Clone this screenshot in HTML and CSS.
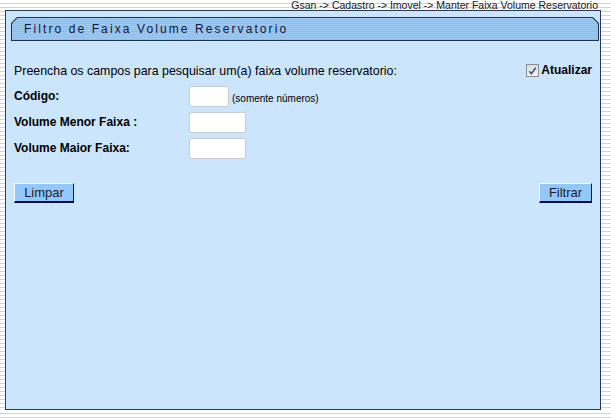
FILE: index.html
```html
<!DOCTYPE html>
<html lang="pt">
<head>
  <meta charset="UTF-8">
  <title>Filtro de Faixa Volume Reservatorio</title>
  <link rel="stylesheet" href="styles.css">
</head>
<body>
  <div class="breadcrumb">Gsan -&gt; Cadastro -&gt; Imovel -&gt; Manter Faixa Volume Reservatorio</div>
  <div class="panel">
    <div class="title-outer">
      <div class="title-inner">Filtro de Faixa Volume Reservatorio</div>
    </div>
    <div class="intro">
      <span>Preencha os campos para pesquisar um(a) faixa volume reservatorio:</span>
      <label class="refresh">
        <span class="check">
          <svg width="12" height="12" viewBox="0 0 12 12"><path d="M2.5 6.2 L4.8 9 L9.5 2.5" fill="none" stroke="#3c4f96" stroke-width="1.6"/></svg>
        </span>
        Atualizar
      </label>
    </div>
    <div class="fields">
      <div class="label">Código:</div>
      <div class="field"><input type="text" class="short"><span class="hint">(somente números)</span></div>
      <div class="label">Volume Menor Faixa :</div>
      <div class="field"><input type="text"></div>
      <div class="label">Volume Maior Faixa:</div>
      <div class="field"><input type="text"></div>
    </div>
    <div class="actions">
      <button class="btn btn-clear">Limpar</button>
      <button class="btn btn-filter">Filtrar</button>
    </div>
  </div>
</body>
</html>
```

FILE: styles.css
```css
body {
  margin: 0;
  padding: 0;
  font-family: "Liberation Sans", Arial, sans-serif;
  background-color: #ffffff;
  background-image: repeating-linear-gradient(to bottom, #ffffff 0, #ffffff 3px, #b8dcf5 3px, #b8dcf5 4px);
  color: #000;
}
.breadcrumb {
  height: 10px;
  line-height: 11px;
  font-size: 10.5px;
  text-align: right;
  padding-right: 13px;
  color: #1a1a1a;
}
.panel {
  margin: 0 10px 0 5px;
  height: 398px;
  border: 1px solid #2a3a55;
  background-color: #cbe5fd;
}
.title-outer {
  margin: 6px 1px 0 5px;
  background-color: #22324f;
  padding: 1px;
  clip-path: polygon(6px 0, calc(100% - 6px) 0, 100% 6px, 100% 100%, 0 100%, 0 6px);
}
.title-inner {
  height: 22px;
  line-height: 23px;
  padding-left: 12px;
  font-size: 12px;
  letter-spacing: 2.1px;
  color: #14143c;
  background-image: repeating-linear-gradient(to bottom, #9fcdf5 0, #9fcdf5 1px, #88bcef 1px, #88bcef 2px);
  clip-path: polygon(5.5px 0, calc(100% - 5.5px) 0, 100% 5.5px, 100% 100%, 0 100%, 0 5.5px);
}
.intro {
  display: flex;
  justify-content: space-between;
  align-items: center;
  margin: 23px 8px 0 8px;
  font-size: 12.4px;
}
.refresh {
  display: flex;
  align-items: center;
  gap: 2px;
  font-weight: bold;
  font-size: 12px;
  margin-top: -2px;
}
.check {
  width: 11px;
  height: 11px;
  border: 1px solid #8e8f8f;
  background: linear-gradient(#dcdcdc, #f4f4f4);
  display: flex;
}
.fields {
  display: grid;
  grid-template-columns: 175px auto;
  row-gap: 5px;
  margin: 8px 8px 0 8px;
}
.label {
  font-size: 12px;
  font-weight: bold;
  line-height: 21px;
}
.field {
  display: flex;
  align-items: center;
  height: 21px;
}
.field input {
  width: 53px;
  height: 17px;
  padding: 1px;
  border: 1px solid #c8ccd2;
  border-radius: 2px;
  background: #fff;
  box-sizing: content-box;
}
.field input.short {
  width: 36px;
}
.hint {
  font-size: 10px;
  margin-left: 3px;
  padding-top: 4px;
}
.actions {
  display: flex;
  justify-content: space-between;
  margin: 24px 8px 0 8px;
}
.btn {
  height: 20px;
  font-family: "Liberation Sans", Arial, sans-serif;
  font-size: 13px;
  color: #1a1a2e;
  background-color: #92c9fa;
  border-top: 1px solid #ffffff;
  border-left: 1px solid #ffffff;
  border-right: 1px solid #0a0a50;
  border-bottom: 2px solid #0a0a50;
  padding: 0 8px;
  line-height: 16px;
}
.btn-clear {
  width: 60px;
}
.btn-filter {
  width: 53px;
}
```
